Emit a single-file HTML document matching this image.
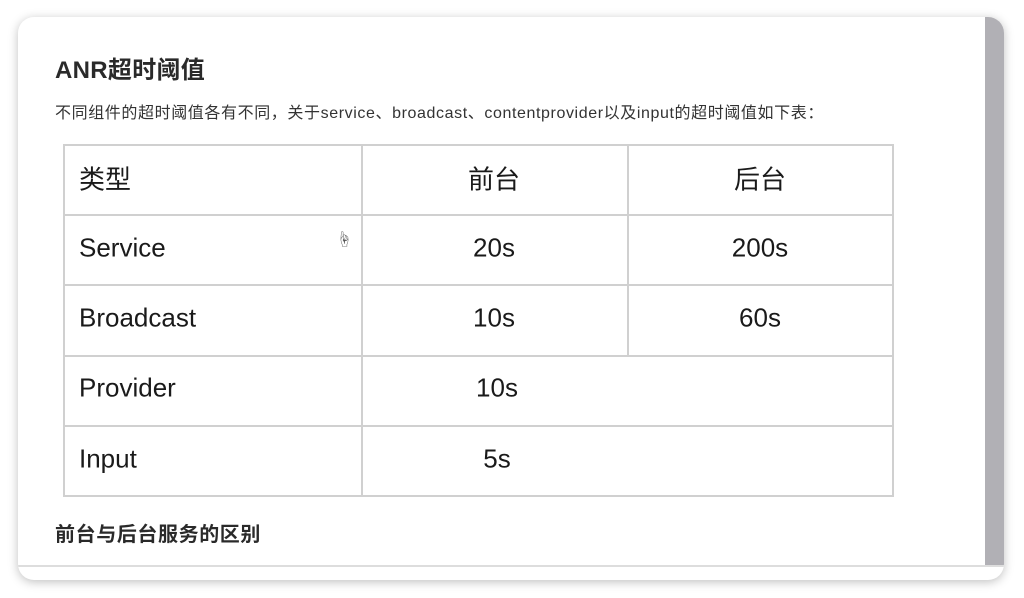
<!DOCTYPE html>
<html><head><meta charset="utf-8"><style>
body{margin:0;width:1024px;height:598px;background:#fff;position:relative;overflow:hidden;font-family:"Liberation Sans","Noto Sans CJK SC",sans-serif;}
.card{position:absolute;left:18px;top:17px;width:986px;height:563px;border-radius:16px;background:#fff;box-shadow:0 2px 10px rgba(0,0,0,.25);overflow:hidden}
.bar{position:absolute;left:967px;top:0;width:19px;height:548px;background:#b1b0b5}
.bot{position:absolute;left:0;top:548px;width:986px;height:2px;background:#ddd}
.t{position:absolute;white-space:nowrap;color:#222}
.h{position:absolute;background:#d0d0d0;height:2px}
.v{position:absolute;background:#d0d0d0;width:2px}
.c{font-size:26px;color:#1a1a1a;transform:translateY(-50%)}
.m{transform:translate(-50%,-50%)}
</style></head><body>
<div class="card"><div class="bar"></div><div class="bot"></div></div>
<div class="t" style="left:55px;top:50px;font-size:24px;font-weight:bold;color:#2a2a2a;letter-spacing:0.3px">ANR超时阈值</div>
<div class="t" style="left:55px;top:99px;font-size:16px;color:#333;letter-spacing:0.6px">不同组件的超时阈值各有不同，关于service、broadcast、contentprovider以及input的超时阈值如下表：</div>
<div class="h" style="left:63px;top:144px;width:831px"></div>
<div class="h" style="left:63px;top:214px;width:831px"></div>
<div class="h" style="left:63px;top:284px;width:831px"></div>
<div class="h" style="left:63px;top:355px;width:831px"></div>
<div class="h" style="left:63px;top:425px;width:831px"></div>
<div class="h" style="left:63px;top:495px;width:831px"></div>
<div class="v" style="left:63px;top:144px;height:353px"></div>
<div class="v" style="left:361px;top:144px;height:353px"></div>
<div class="v" style="left:627px;top:144px;height:212px"></div>
<div class="v" style="left:892px;top:144px;height:353px"></div>
<div class="t c" style="left:79px;top:178px">类型</div>
<div class="t c m" style="left:494px;top:178px">前台</div>
<div class="t c m" style="left:760px;top:178px">后台</div>
<div class="t c" style="left:79px;top:248px">Service</div>
<div class="t c m" style="left:494px;top:248px">20s</div>
<div class="t c m" style="left:760px;top:248px">200s</div>
<div class="t c" style="left:79px;top:318px">Broadcast</div>
<div class="t c m" style="left:494px;top:318px">10s</div>
<div class="t c m" style="left:760px;top:318px">60s</div>
<div class="t c" style="left:79px;top:388px">Provider</div>
<div class="t c m" style="left:497px;top:388px">10s</div>
<div class="t c" style="left:79px;top:459px">Input</div>
<div class="t c m" style="left:497px;top:459px">5s</div>
<div class="t" style="left:336px;top:226px;font-size:16px;color:#555">☝</div>
<div class="t" style="left:55px;top:518px;font-size:20px;font-weight:bold;color:#2a2a2a;letter-spacing:0.6px">前台与后台服务的区别</div>
</body></html>
